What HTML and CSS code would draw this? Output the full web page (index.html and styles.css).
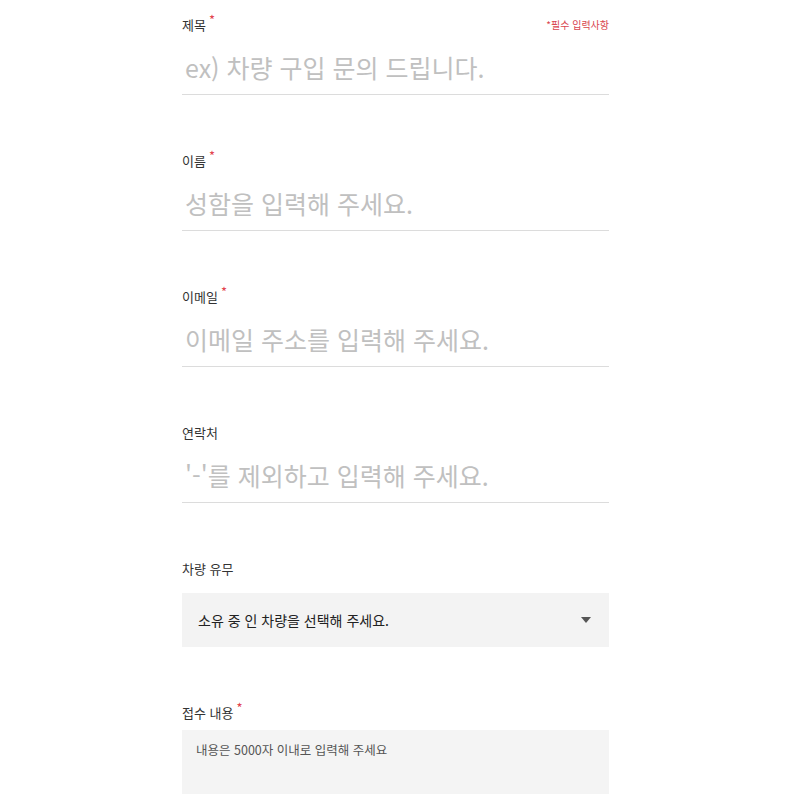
FILE: index.html
```html
<!DOCTYPE html>
<html lang="ko">
<head>
<meta charset="utf-8">
<link rel="stylesheet" href="styles.css">
</head>
<body>
<form class="form">
  <div class="field">
    <div class="label-row">
      <label class="label">제목<span class="req">*</span></label>
      <span class="note">*필수 입력사항</span>
    </div>
    <input class="line-input" type="text" placeholder="ex) 차량 구입 문의 드립니다.">
  </div>
  <div class="field">
    <div class="label-row"><label class="label">이름<span class="req">*</span></label></div>
    <input class="line-input" type="text" placeholder="성함을 입력해 주세요.">
  </div>
  <div class="field">
    <div class="label-row"><label class="label">이메일<span class="req">*</span></label></div>
    <input class="line-input" type="text" placeholder="이메일 주소를 입력해 주세요.">
  </div>
  <div class="field">
    <div class="label-row"><label class="label">연락처</label></div>
    <input class="line-input" type="text" placeholder="'-'를 제외하고 입력해 주세요.">
  </div>
  <div class="field">
    <div class="label-row"><label class="label">차량 유무</label></div>
    <div class="select">
      <span class="select-text">소유 중 인 차량을 선택해 주세요.</span>
      <span class="caret"></span>
    </div>
  </div>
  <div class="field field-last">
    <div class="label-row"><label class="label">접수 내용<span class="req">*</span></label></div>
    <textarea class="area" placeholder="내용은 5000자 이내로 입력해 주세요"></textarea>
  </div>
</form>
</body>
</html>
```
FILE: styles.css
```css
html, body {
  margin: 0;
  padding: 0;
  background: #fff;
}
body {
  font-family: "Noto Sans CJK KR", "Noto Sans", sans-serif;
  color: #222;
}
.form {
  width: 427px;
  margin: 0 auto;
  padding-top: 14px;
  display: flex;
  flex-direction: column;
  gap: 55px;
}
.label-row {
  display: flex;
  justify-content: space-between;
  align-items: center;
  height: 20px;
}
.label {
  font-size: 13px;
  color: #333;
}
.req {
  color: #e2434d;
  font-size: 13px;
  position: relative;
  top: -5px;
  margin-left: 3px;
}
.note {
  font-size: 10px;
  color: #d9454f;
}
.line-input {
  display: block;
  box-sizing: border-box;
  width: 100%;
  height: 61px;
  padding: 18px 3px 12px;
  border: 0;
  border-bottom: 1px solid #dcdcdc;
  font-family: inherit;
  font-size: 25px;
  line-height: 30px;
  outline: none;
  background: transparent;
}
.line-input::placeholder {
  color: #c0c0c0;
}
.select {
  margin-top: 15px;
  height: 54px;
  background: #f3f3f3;
  display: flex;
  align-items: center;
  justify-content: space-between;
  padding: 0 18px 0 16px;
}
.select-text {
  font-size: 14px;
  color: #222;
}
.caret {
  width: 0;
  height: 0;
  border-left: 5px solid transparent;
  border-right: 5px solid transparent;
  border-top: 6px solid #555;
}
.field-last .label-row {
  margin-bottom: 8px;
}
.area {
  display: block;
  box-sizing: border-box;
  width: 100%;
  height: 120px;
  border: 0;
  background: #f4f4f4;
  padding: 11px 14px;
  font-family: inherit;
  font-size: 12.5px;
  line-height: 18px;
  resize: none;
  outline: none;
}
.area::placeholder {
  color: #555;
}
```
